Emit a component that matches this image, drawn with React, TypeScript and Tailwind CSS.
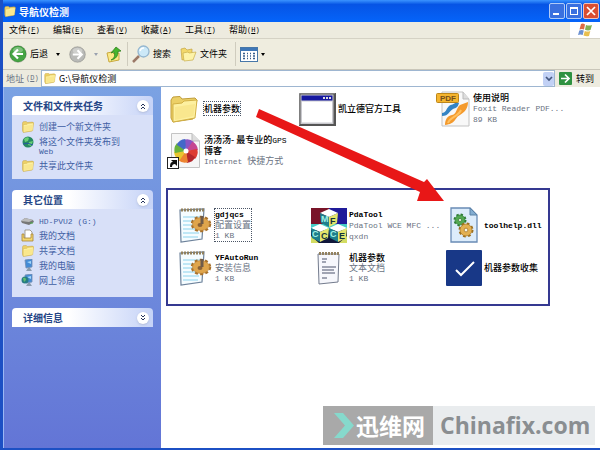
import type { ReactNode } from "react";

const cjk = "font-['Noto_Sans_CJK_SC',sans-serif]";
const mono = "font-['Liberation_Mono','Noto_Sans_CJK_SC',monospace]";

const FolderIcon = ({ className }: { className: string }) => (
  <svg viewBox="0 0 28 27" className={className}>
    <path d="M1 4L3 1L10 0.500L12 3L25 2L27 4L26 8L23 23L3 26L1 22Z" fill="#ecd067" stroke="#c09d3a" />
    <path d="M3 8L12 7L14 5L27 4L25 22L3 26Z" fill="#fdf0a0" stroke="#d3b145" />
    <path d="M5 11L25 8L23.500 20L5 24Z" fill="#f9e78e" />
  </svg>
);

const ArrowIcon = ({ color, size }: { color: string; size: string }) => (
  <svg viewBox="0 0 18 18" className={size}>
    <circle cx="9" cy="9" r="8.3" fill={color} stroke="#00000033" />
    <ellipse cx="9" cy="5" rx="5" ry="3" fill="#fff" opacity=".3" />
    <path d="M14 9H5M9 4.5L4.5 9L9 13.5" fill="none" stroke="#fff" strokeWidth="2.2" />
  </svg>
);

const UpIcon = () => (
  <svg viewBox="0 0 17 17" className="size-[17px]">
    <path d="M1 7L6 6L8 8L13 7V14L3 16Z" fill="#fbe986" stroke="#c9a93e" />
    <path d="M5 14C9 12 9 9 8 6L5 7L10 1L15 5L12 5.500C12 10 10 13 5 14Z" fill="#45b52c" stroke="#257a16" strokeWidth=".7" />
  </svg>
);

const SearchIcon = () => (
  <svg viewBox="0 0 18 18" className="size-[18px]">
    <path d="M7 11L1 17" stroke="#9b7967" strokeWidth="2.5" />
    <circle cx="11.5" cy="6.5" r="5.5" fill="#cce9f8" stroke="#94b6cf" strokeWidth="1.3" />
    <path d="M8 6A4 4 0 0 1 12 3" stroke="#fff" strokeWidth="1.5" fill="none" />
  </svg>
);

const OpenFolders = () => (
  <svg viewBox="0 0 17 15" className="h-[15px] w-[17px]">
    <path d="M1 2L5 1L7 3L12 2V10L2 13Z" fill="#f2d86b" stroke="#c4a544" strokeWidth=".7" />
    <path d="M3 6L8 5L9 6L16 5L13 13L4 14Z" fill="#fdf3a8" stroke="#c9ae49" strokeWidth=".7" />
  </svg>
);

const ViewIcon = () => (
  <svg viewBox="0 0 18 15" className="h-[15px] w-[18px]">
    <rect x=".5" y=".5" width="17" height="14" fill="#fff" stroke="#4777a8" />
    <rect x="1" y="1" width="16" height="3" fill="#3f77b7" />
    <path d="M3 6.5h2m2 0h1m2 0h1m2 0h2M3 9h2m2 0h1m2 0h1m2 0h2M3 11.5h2m2 0h1m2 0h1m2 0h2" stroke="#365d8c" strokeWidth="1.3" />
  </svg>
);

const FlagIcon = () => (
  <svg viewBox="0 0 15 14" className="h-[14px] w-[15px]">
    <path d="M3 1Q5 0 7 1.5L6 6.5Q4 5.5 1.5 6.5Z" fill="#dc6a45" />
    <path d="M8 2Q11 3 14 2L12.5 7Q10 8 7 6.8Z" fill="#82b053" />
    <path d="M1.3 7.5Q4 6.5 5.8 7.5L4.7 12Q2.5 11 0 12Z" fill="#6c91d1" />
    <path d="M6.8 8Q9.5 9 12.3 8L11 13Q8 13.8 5.5 12.5Z" fill="#e9bf4e" />
  </svg>
);

const WindowIcon = () => (
  <svg viewBox="0 0 37 33" className="h-[33px] w-[37px]">
    <rect width="37" height="33" fill="#555" />
    <path d="M0 32V0H36" stroke="#aaa" fill="none" />
    <rect x="1.5" y="1.5" width="33" height="29.5" fill="#c9c9ce" />
    <rect x="2.5" y="2.5" width="31" height="5" fill="#1618a0" />
    <path d="M24 5h2m1 0h2m1 0h2" stroke="#ddd" strokeWidth="2" />
    <rect x="3" y="8.5" width="30" height="21" fill="#fff" />
  </svg>
);

const PdfIcon = () => (
  <svg viewBox="0 0 34 36" className="h-[36px] w-[34px]">
    <path d="M6 1H27L33 8V35H6Z" fill="#f8f8f8" stroke="#c3c3c3" />
    <path d="M27 1V8H33" fill="#ddd" stroke="#bbb" />
    <path d="M6 22C10 22 10 18 13 15C15 13 18 14 20 11L23 12C22 16 20 17 17 18C13 20 13 25 6 25Z" fill="#3484c4" />
    <path d="M9 34C9 29 11 25 16 24C21 23 20 17 24 14L32 11C32 17 29 21 24 24C19 26 20 33 9 34Z" fill="#f49a2d" />
    <path d="M12 32C14 26 22 26 25 19" stroke="#ffc060" strokeWidth="2" fill="none" />
    <rect x=".5" y="2.5" width="22" height="9" rx="1" fill="#f5b52e" stroke="#bd8619" />
    <text x="4" y="10" fontSize="8" fontWeight="bold" fill="#75501a" fontFamily="Liberation Sans, sans-serif">PDF</text>
  </svg>
);

const blades = ["#8a55c4", "#c54791", "#dd3b31", "#b3262b", "#ed8430", "#e8c52e", "#68b23c", "#4368c8"];

const ShortcutIcon = () => (
  <svg viewBox="0 0 34 36" className="h-[36px] w-[34px]">
    <path d="M4.5 .5H25L32.5 8V34.5H4.5Z" fill="#f6f6f6" stroke="#c4c4c4" />
    <path d="M25 .5V8H32.5" fill="#ddd" stroke="#bbb" />
    {blades.map((color, i) => (
      <path key={color} d="M19 18L17 7Q22 5 27 9Z" fill={color} transform={`rotate(${i * 45} 19 18)`} />
    ))}
    <circle cx="19" cy="18" r="2.5" fill="#fff" />
    <rect x=".5" y="24.5" width="11" height="11" fill="#fff" stroke="#222" />
    <path d="M3 34C3 30 4 29 6 29L4 27H10V33L8 31C6 31 5 32 5 34Z" fill="#111" />
  </svg>
);

const Gear = ({ x, y, r, color, edge }: { x: number; y: number; r: number; color: string; edge: string }) => (
  <g>
    <circle cx={x} cy={y} r={r} fill="none" stroke={edge} strokeWidth="3" strokeDasharray={`${r * 0.42} ${r * 0.365}`} />
    <circle cx={x} cy={y} r={r} fill={color} stroke={edge} strokeWidth=".6" />
    <circle cx={x} cy={y} r={r / 3.2} fill="#f6f5e8" stroke={edge} strokeWidth=".7" />
  </g>
);

const NotepadGearIcon = () => (
  <svg viewBox="0 0 34 36" className="h-[36px] w-[34px]">
    <path d="M2 3L26 2L24 32L3 35Z" fill="#f5fcff" stroke="#6d829b" strokeWidth="1.2" />
    <path d="M5 10H22M5 14H17M5 18H15M5 22H17M5 26H21M5 30H20" stroke="#8bd2ee" strokeWidth="1.2" />
    <path d="M3 3H26" stroke="#91805d" strokeWidth="3" strokeDasharray="2 1" />
    <ellipse cx="23" cy="17" rx="9" ry="7" fill="none" stroke="#a8702a" strokeWidth="2.5" strokeDasharray="3 2.2" />
    <ellipse cx="23" cy="17" rx="8.5" ry="6.5" fill="#dfa54c" stroke="#b37a2f" strokeWidth=".6" />
    <ellipse cx="22" cy="18" rx="2.5" ry="2" fill="#8a6236" />
    <path d="M24 17V9" stroke="#6f5b4a" strokeWidth="3" />
  </svg>
);

const NotepadIcon = () => (
  <svg viewBox="0 0 24 34" className="h-[34px] w-[24px]">
    <path d="M1 3H22L21 31L2 33Z" fill="#f6f7fc" stroke="#737b8d" />
    <path d="M2 2.5H22" stroke="#92815f" strokeWidth="3" strokeDasharray="2 1" />
    <path d="M5 8H10M5 11H9M5 16H19M5 19H17M5 22H18M5 27H10" stroke="#4b536a" strokeWidth="1.2" />
  </svg>
);

const Cube = ({ x, y, left, right }: { x: number; y: number; left: string; right: string }) => (
  <g transform={`translate(${x} ${y})`} fontSize="9" fontWeight="bold" fontFamily="Liberation Sans, sans-serif">
    <path d="M0 4L9 0L18 4L9 8Z" fill="#fff" />
    <path d="M0 4L9 8V18L1 14Z" fill="#1f7f8d" />
    <path d="M9 8L18 4L17 14L9 18Z" fill="#e3e46c" />
    <text x="1" y="13" fill="#9ff0e4">{left}</text>
    <text x="10" y="15" fill="#15343b">{right}</text>
  </g>
);

const CubesIcon = () => (
  <svg viewBox="0 0 36 35" className="h-[35px] w-[36px]">
    <rect width="36" height="35" fill="#10173a" />
    <path d="M0 0H18V16H0Z" fill="#791429" />
    <path d="M18 0H36V16H18Z" fill="#201b99" />
    <path d="M0 16H36V22H0Z" fill="#46cbc5" />
    <path d="M0 28L8 35H0ZM36 28L28 35H36Z" fill="#d3dc62" />
    <Cube x={9} y={1} left="M" right="F" />
    <Cube x={0} y={16} left="C" right="C" />
    <Cube x={18} y={16} left="C" right="E" />
  </svg>
);

const DllIcon = () => (
  <svg viewBox="0 0 28 36" className="h-[36px] w-[28px]">
    <path d="M1 1H20L27 8V35H1Z" fill="#dcecfb" stroke="#688bb5" strokeWidth="1.3" />
    <path d="M20 1V8H27Z" fill="#82add1" stroke="#5b82a7" />
    <Gear x={10} y={13} r={5} color="#54a853" edge="#2e7b34" />
    <Gear x={16} y={23} r={6} color="#e3b051" edge="#9d6f1f" />
  </svg>
);

const CheckIcon = () => (
  <svg viewBox="0 0 36 36" className="size-9">
    <rect width="36" height="36" rx="1" fill="#183887" />
    <path d="M10 20L15 25L28 12" stroke="#fff" strokeWidth="2" fill="none" />
  </svg>
);

const GlobeIcon = () => (
  <svg viewBox="0 0 12 12" className="size-3">
    <circle cx="6" cy="6" r="5.5" fill="#268960" />
    <path d="M2 3Q5 0 7 2L6 5L3 6ZM7 6L11 5L9 10L6 9Z" fill="#67cf75" />
    <path d="M1 8Q6 6 11 9" stroke="#2459a1" fill="none" />
  </svg>
);

const DriveIcon = () => (
  <svg viewBox="0 0 13 8" className="h-2 w-[13px]">
    <path d="M0 4L4 1L12 3L13 5L8 8L1 6Z" fill="#777" />
    <path d="M0 4L4 1L12 3L8 5Z" fill="#bbb" />
    <path d="M9 6H12" stroke="#46a845" />
  </svg>
);

const DocumentsIcon = () => (
  <svg viewBox="0 0 13 13" className="size-[13px]">
    <path d="M4 1H9L11 3V10H4Z" fill="#fff" stroke="#887b61" strokeWidth=".7" />
    <path d="M1 5H3V9H10V5H12V12H1Z" fill="#f4d76f" stroke="#a78436" strokeWidth=".8" />
  </svg>
);

const ComputerIcon = ({ network = false }: { network?: boolean }) => (
  <svg viewBox="0 0 13 13" className="size-[13px]">
    <path d="M4 1L11 0V8L5 9Z" fill="#438bd6" stroke="#718bb0" strokeWidth=".8" />
    <path d="M6 3L10 2V5Z" fill="#a3d7fa" />
    <path d="M7 9H9L11 12H5Z" fill="#8b9cae" />
    {network && <circle cx="4" cy="6" r="3.5" fill="#277d83" />}
    {network && <path d="M2 4Q5 3 5 6L3 8Z" fill="#62c16d" />}
  </svg>
);

const Latin = ({ children }: { children: ReactNode }) => (
  <span className={`text-[8px] ${mono}`}>{children}</span>
);

const Panel = ({ title, children, closed = false }: { title: string; children?: ReactNode; closed?: boolean }) => (
  <section>
    <h2 className="flex h-[19px] items-center justify-between rounded-t-sm bg-linear-to-r from-white from-40% to-[#c6d3f7] pr-1 pl-[11px] text-[10px] font-bold text-[#254585]">
      {title}
      <button aria-label={title} className="flex size-3 items-center justify-center rounded-full bg-white shadow-sm">
        <svg viewBox="0 0 8 8" className={closed ? "size-2 rotate-180" : "size-2"}>
          <path d="M2 4L4 2L6 4M2 7L4 5L6 7" stroke="#26345c" fill="none" />
        </svg>
      </button>
    </h2>
    {children}
  </section>
);

const Task = ({ icon, label }: { icon: ReactNode; label: ReactNode }) => (
  <a href="#" className="flex items-start gap-1 text-[9px] leading-[9px] text-[#3f5ea3]">
    <span className="flex h-[11px] w-[15px] shrink-0 items-center justify-center">{icon}</span>
    <span className="pt-px whitespace-nowrap">{label}</span>
  </a>
);

type FileProps = { icon: ReactNode; name: ReactNode; details?: ReactNode[]; selected?: boolean };

const FileItem = ({ icon, name, details = [], selected = false }: FileProps) => (
  <button className="flex items-center text-left text-[9px] leading-[10px] whitespace-nowrap">
    <span className="mr-[2px] flex w-[37px] shrink-0 justify-center">{icon}</span>
    <span className={selected ? "outline outline-dotted outline-gray-600" : ""}>
      <span className="block font-medium text-black">{name}</span>
      {details.map((line, i) => (
        <span key={i} className="block text-gray-500">
          {line}
        </span>
      ))}
    </span>
  </button>
);

const menus = [
  ["文件", "F"],
  ["编辑", "E"],
  ["查看", "V"],
  ["收藏", "A"],
  ["工具", "T"],
  ["帮助", "H"],
];

const App = () => {
  return (
    <div className={`relative flex min-h-screen flex-col overflow-hidden border-b-2 border-l-[3px] border-[#1c50c4] bg-white ${cjk}`}>
      <header className="-ml-[3px] flex h-[22px] items-center bg-linear-to-b from-[#3b93ff] via-[#0654e5] via-20% to-[#0564fa] pr-px pl-1 text-white">
        <FolderIcon className="mr-[3px] h-[11px] w-3" />
        <h1 className="grow text-[10px] font-bold">导航仪检测</h1>
        <div className="flex gap-px">
          <button aria-label="最小化" className="flex size-4 items-end rounded-xs border border-[#b1cbf7] bg-[#3a70df] p-[3px]">
            <span className="h-[2px] w-[6px] bg-white" />
          </button>
          <button aria-label="最大化" className="size-4 rounded-xs border border-[#b1cbf7] bg-[#3a70df] p-[3px]">
            <span className="block size-2 border border-t-2 border-white" />
          </button>
          <button aria-label="关闭" className="flex size-4 items-center justify-center rounded-xs border border-[#edc2bb] bg-[#d94e32]">
            <svg viewBox="0 0 10 10" className="size-[10px]">
              <path d="M1 1L9 9M9 1L1 9" stroke="#fff" strokeWidth="1.7" />
            </svg>
          </button>
        </div>
      </header>

      <nav className="flex h-[17px] items-stretch border-b border-[#d5d2c5] bg-[#edebdf]">
        <div className="flex grow items-center gap-[13px] pl-[6px] text-[9px]">
          {menus.map(([name, key]) => (
            <button key={key} className="flex w-[31px] items-center whitespace-nowrap">
              {name}
              <span className={`text-[7px] ${mono}`}>(<u>{key}</u>)</span>
            </button>
          ))}
        </div>
        <div className="flex w-[30px] items-center justify-center bg-white">
          <FlagIcon />
        </div>
      </nav>

      <div className="flex h-[31px] items-center border-b border-[#c9c6b9] bg-[#efeddf] pl-[6px] text-[9px]">
        <button className="flex items-center gap-[3px]">
          <ArrowIcon color="#45a443" size="size-[18px]" />
          后退
        </button>
        <span className="ml-2 border-x-2 border-t-3 border-x-transparent border-t-black" />
        <button aria-label="前进" className="ml-[9px]">
          <ArrowIcon color="#b9bab7" size="size-[17px] -scale-x-100" />
        </button>
        <span className="ml-2 border-x-2 border-t-3 border-x-transparent border-t-gray-400" />
        <button aria-label="向上" className="ml-2">
          <UpIcon />
        </button>
        <span className="mx-1 h-6 border-l border-[#cfccbe]" />
        <button className="flex items-center gap-[3px]">
          <SearchIcon />
          搜索
        </button>
        <button className="ml-[9px] flex items-center gap-[3px]">
          <OpenFolders />
          文件夹
        </button>
        <span className="mr-1 ml-2 h-6 border-l border-[#cfccbe]" />
        <button aria-label="查看方式" className="flex items-center gap-[3px]">
          <ViewIcon />
          <span className="border-x-2 border-t-3 border-x-transparent border-t-black" />
        </button>
      </div>

      <div className="flex h-[17px] items-center bg-[#edebdf] text-[9px]">
        <label htmlFor="address" className="flex w-[38px] items-center pl-[3px] whitespace-nowrap text-gray-500">
          地址<span className={`pl-[2px] text-[7px] ${mono}`}>(<u>D</u>)</span>
        </label>
        <div className="flex h-[17px] min-w-0 grow items-center border border-[#9eb6d1] bg-white pl-[2px]">
          <FolderIcon className="h-[11px] w-3" />
          <input id="address" defaultValue="G:\导航仪检测" className="min-w-0 grow bg-transparent pl-[3px] outline-none" />
          <button aria-label="地址列表" className="flex h-[14px] w-[11px] items-center justify-center rounded-xs bg-[#c2d1f5]">
            <svg viewBox="0 0 8 6" className="h-[6px] w-2">
              <path d="M1 1L4 4L7 1" stroke="#45577e" strokeWidth="1.7" fill="none" />
            </svg>
          </button>
        </div>
        <button className="ml-1 flex w-[41px] items-center gap-1">
          <svg viewBox="0 0 13 13" className="size-[13px]">
            <rect width="13" height="13" rx="1" fill="#2f9241" />
            <path d="M2 6.5H10M6 2.5L10 6.5L6 10.5" stroke="#fff" strokeWidth="1.7" fill="none" />
          </svg>
          转到
        </button>
      </div>

      <div className="flex grow">
        <aside className="flex w-[158px] shrink-0 flex-col gap-[11px] border-l border-[#9bb8f5] bg-linear-to-b from-[#7ba2e3] to-[#6375d6] px-2 pt-[9px]">
          <Panel title="文件和文件夹任务">
            <div className="flex h-16 flex-col gap-1 bg-[#d8e0f8] pt-[6px] pl-2">
              <Task icon={<FolderIcon className="h-3 w-3" />} label="创建一个新文件夹" />
              <Task icon={<GlobeIcon />} label={<>将这个文件夹发布到<br /><Latin>Web</Latin></>} />
              <Task icon={<FolderIcon className="h-3 w-3" />} label="共享此文件夹" />
            </div>
          </Panel>
          <Panel title="其它位置">
            <div className="flex h-[88px] flex-col gap-1 bg-[#d8e0f8] pt-[6px] pl-2">
              <Task icon={<DriveIcon />} label={<Latin>HD-PVU2 (G:)</Latin>} />
              <Task icon={<DocumentsIcon />} label="我的文档" />
              <Task icon={<FolderIcon className="h-3 w-3" />} label="共享文档" />
              <Task icon={<ComputerIcon />} label="我的电脑" />
              <Task icon={<ComputerIcon network />} label="网上邻居" />
            </div>
          </Panel>
          <Panel title="详细信息" closed />
        </aside>

        <main className="min-w-0 grow pt-1 pl-1">
          <div className="grid w-[405px] grid-cols-[134px_135px_136px] gap-y-[6px]">
            <FileItem icon={<FolderIcon className="h-[29px] w-[28px]" />} name={<span className="outline outline-dotted outline-gray-600">机器参数</span>} />
            <FileItem icon={<WindowIcon />} name="凯立德官方工具" />
            <FileItem icon={<PdfIcon />} name="使用说明" details={[<Latin>Foxit Reader PDF...</Latin>, <Latin>89 KB</Latin>]} />
            <FileItem icon={<ShortcutIcon />} name={<>汤汤汤- 最专业的<Latin>GPS</Latin><br />博客</>} details={[<><Latin>Internet </Latin>快捷方式</>]} />
          </div>
          <div className="ml-px mt-[19px] grid w-[384px] grid-cols-[134px_135px_1fr] gap-y-[7px] border-2 border-[#353991] pt-[17px] pb-[18px] pl-2">
            <FileItem selected icon={<NotepadGearIcon />} name={<b><Latin>gdjqcs</Latin></b>} details={["配置设置", <Latin>1 KB</Latin>]} />
            <FileItem icon={<CubesIcon />} name={<b><Latin>PdaTool</Latin></b>} details={[<Latin>PdaTool WCE MFC ...</Latin>, <Latin>qxdn</Latin>]} />
            <FileItem icon={<DllIcon />} name={<b><Latin>toolhelp.dll</Latin></b>} />
            <FileItem icon={<NotepadGearIcon />} name={<b><Latin>YFAutoRun</Latin></b>} details={["安装信息", <Latin>1 KB</Latin>]} />
            <FileItem icon={<NotepadIcon />} name="机器参数" details={["文本文档", <Latin>1 KB</Latin>]} />
            <FileItem icon={<CheckIcon />} name="机器参数收集" />
          </div>
        </main>
      </div>

      <svg viewBox="0 0 220 98" className="pointer-events-none absolute top-[108px] left-[250px] h-[98px] w-[220px]">
        <path d="M6 1L171 74L174 71L191 93L164 93L167 84L3 9Z" fill="#e81717" />
      </svg>

      <div className="absolute right-[5px] bottom-[3px] flex h-[39px] items-center bg-[#e9ecee] text-[23px] font-bold text-[#8a8e91]">
        <div className="flex h-full w-[110px] items-center bg-[#a9a9a9] pl-[11px] text-white">
          <svg viewBox="0 0 20 25" className="h-[25px] w-5">
            <path d="M0 0H9L20 12.5L9 25H0L11 12.5Z" fill="#86d9cc" />
          </svg>
          <span className="ml-[2px]">迅维网</span>
        </div>
        <span className="w-[162px] pl-[7px] font-['Open_Sans',sans-serif]">Chinafix.com</span>
      </div>
    </div>
  );
};

export default App;
